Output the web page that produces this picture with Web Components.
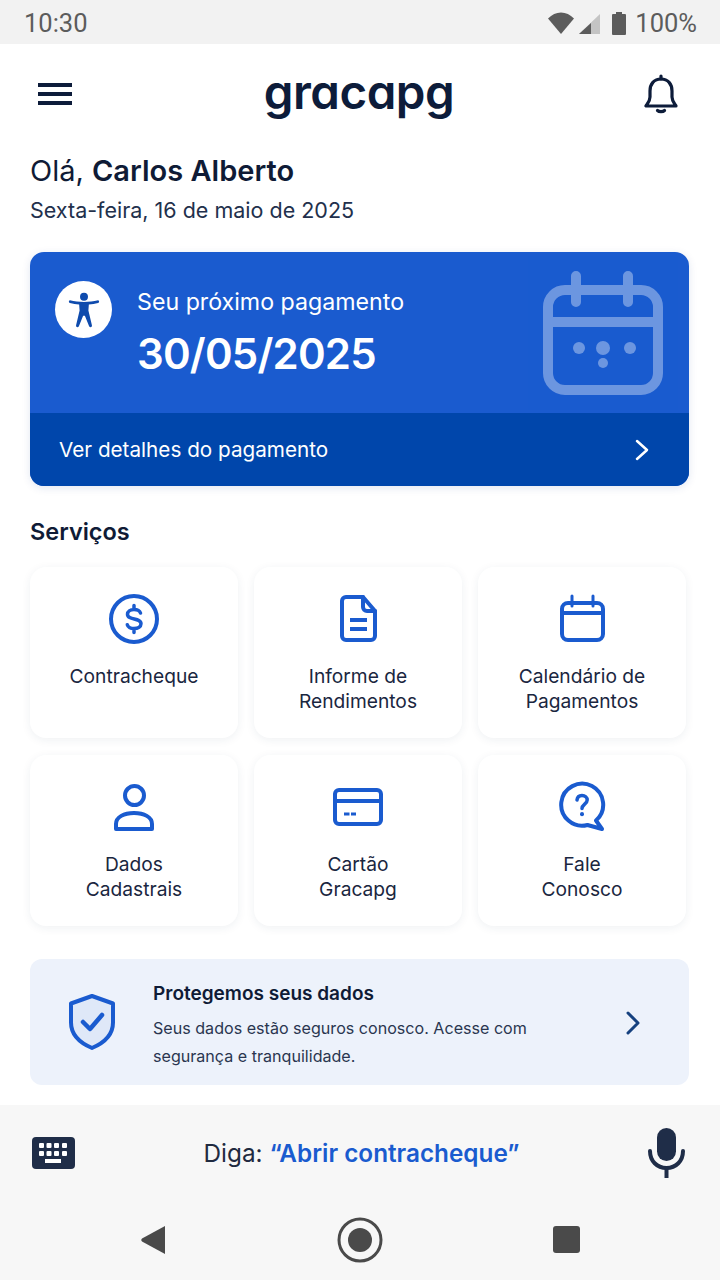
<!DOCTYPE html>
<html lang="pt-BR">
<head>
<meta charset="utf-8">
<title>Gracapg</title>
<style>
  html, body { margin: 0; padding: 0; background: #fff; }
  body { width: 720px; height: 1280px; overflow: hidden; font-family: Inter, "Liberation Sans", sans-serif; color: #0f1b36; display: flex; flex-direction: column; }
  main-content { flex: 1; }
</style>
</head>
<body>
<status-bar></status-bar>
<app-header></app-header>
<main-content>
  <greeting-block name="Carlos Alberto" date="Sexta-feira, 16 de maio de 2025"></greeting-block>
  <payment-card date="30/05/2025"></payment-card>
  <section-title>Serviços</section-title>
  <service-grid>
    <service-tile>
      <svg slot="icon" width="64" height="56" viewBox="0 0 64 56" fill="none" stroke="#1a5bcf" stroke-width="4" stroke-linecap="round" stroke-linejoin="round">
        <circle cx="32" cy="28" r="23"/>
        <path stroke-width="3.500" d="M38.500 22c-.8-2.300-3.200-3.500-6.500-3.500-3.800 0-6.500 1.900-6.500 4.700 0 6.600 13.500 3.100 13.500 9.600 0 2.900-2.900 4.700-7 4.700-3.400 0-5.900-1.300-6.700-3.800M32 14.500v4M32 37.500v4"/>
      </svg>
      Contracheque
    </service-tile>
    <service-tile>
      <svg slot="icon" width="64" height="56" viewBox="0 0 64 56" fill="none" stroke="#1a5bcf" stroke-width="4" stroke-linecap="round" stroke-linejoin="round">
        <path d="M16 10a4 4 0 0 1 4-4h17l12 14v25a4 4 0 0 1-4 4H20a4 4 0 0 1-4-4z"/>
        <path d="M37 6v10a4 4 0 0 0 4 4h8"/>
        <path stroke-linecap="butt" d="M24 29h17M24 38h17"/>
      </svg>
      Informe de<br>Rendimentos
    </service-tile>
    <service-tile>
      <svg slot="icon" width="64" height="56" viewBox="0 0 64 56" fill="none" stroke="#1a5bcf" stroke-width="4" stroke-linecap="round" stroke-linejoin="round">
        <rect x="12" y="12" width="41" height="37" rx="6"/>
        <path d="M12 22h41"/>
        <path stroke-width="3" d="M22 5v10M43 5v10"/>
      </svg>
      Calendário de<br>Pagamentos
    </service-tile>
    <service-tile>
      <svg slot="icon" width="64" height="56" viewBox="0 0 64 56" fill="none" stroke="#1a5bcf" stroke-width="4" stroke-linecap="round" stroke-linejoin="round">
        <circle cx="32.500" cy="16.500" r="9.500"/>
        <path d="M14 50v-5c0-7 8-11 18-11s18 4 18 11v5z"/>
      </svg>
      Dados<br>Cadastrais
    </service-tile>
    <service-tile>
      <svg slot="icon" width="64" height="56" viewBox="0 0 64 56" fill="none" stroke="#1a5bcf" stroke-width="4" stroke-linecap="round" stroke-linejoin="round">
        <rect x="9" y="11" width="46" height="34" rx="4"/>
        <path d="M9 22h46"/>
        <path stroke-width="3" stroke-linecap="butt" d="M18 35h5.500M25 35h5"/>
      </svg>
      Cartão<br>Gracapg
    </service-tile>
    <service-tile>
      <svg slot="icon" width="64" height="56" viewBox="0 0 64 56" fill="none" stroke="#1a5bcf" stroke-width="4" stroke-linecap="round" stroke-linejoin="round">
        <path d="M46 41.500A21 21 0 1 0 37.500 46L52 50z"/>
        <path stroke-width="3.500" d="M27 21c.3-2.800 2.400-4.500 5-4.500 3 0 5.200 1.900 5.200 4.500 0 4-5.200 4.200-5.200 8.500"/>
        <path d="M32 35v.2"/>
      </svg>
      Fale<br>Conosco
    </service-tile>
  </service-grid>
  <security-banner heading="Protegemos seus dados">Seus dados estão seguros conosco. Acesse com<br>segurança e tranquilidade.</security-banner>
</main-content>
<voice-bar></voice-bar>

<script>
class StatusBar extends HTMLElement {
  constructor() {
    super();
    this.attachShadow({ mode: 'open' }).innerHTML = `
    <style>
      :host { display: flex; align-items: center; justify-content: space-between; height: 44px; box-sizing: border-box; padding: 2px 23px 0 24px; background: #f2f2f2; color: #5c5c5c; font: 400 25.500px Roboto, "Liberation Sans", sans-serif; }
      .right { display: flex; align-items: center; gap: 8px; }
      svg { display: block; }
    </style>
    <span>10:30</span>
    <div class="right">
      <svg width="30" height="24" viewBox="0 0 30 24"><path d="M2 7.500C6 3.500 10 1.500 15 1.500s9 2 13 6L15 23z" fill="#5c5c5c"/></svg>
      <svg width="22" height="24" viewBox="0 0 22 24" style="margin-left:-6px"><path d="M22 3v20H1z" fill="#c4c4c4"/><path d="M13 12v11H1z" fill="#5c5c5c"/></svg>
      <svg width="14" height="24" viewBox="0 0 14 24" style="margin:0 1px 0 4px"><path d="M4 1h6v2h3a1 1 0 0 1 1 1v19a1 1 0 0 1-1 1H1a1 1 0 0 1-1-1V4a1 1 0 0 1 1-1h3z" fill="#5c5c5c"/></svg>
      <span>100%</span>
    </div>`;
  }
}

class AppHeader extends HTMLElement {
  constructor() {
    super();
    this.attachShadow({ mode: 'open' }).innerHTML = `
    <style>
      :host { display: flex; align-items: center; justify-content: space-between; height: 100px; padding: 0 42px 0 38px; color: #0d1c3a; }
      .logo { font: 600 47.500px/1 Inter, "Liberation Sans", sans-serif; font-feature-settings: "cv11"; letter-spacing: -0.5px; margin-top: -5px; position: relative; left: 1px; }
      svg { display: block; }
    </style>
    <svg width="34" height="24" viewBox="0 0 34 24" fill="none" stroke="#0d1c3a" stroke-width="4"><path d="M0 3h34M0 12h34M0 21h34"/></svg>
    <span class="logo">gracapg</span>
    <svg width="34" height="40" viewBox="0 0 34 40" fill="none" stroke="#0d1c3a" stroke-width="3.200" stroke-linecap="round" stroke-linejoin="round">
      <path d="M17 5c-7 0-11 5-11 12v6c0 4-2 6-4 9h30c-2-3-4-5-4-9v-6c0-7-4-12-11-12z"/>
      <path d="M17 2v3M13.500 36.500c1.500 1.500 5.500 1.500 7 0"/>
    </svg>`;
  }
}

class GreetingBlock extends HTMLElement {
  constructor() {
    super();
    this.attachShadow({ mode: 'open' }).innerHTML = `
    <style>
      :host { display: block; padding: 9px 30px 0; height: 108px; box-sizing: border-box; color: #0f1b36; }
      h1 { margin: 0; font-size: 29px; line-height: 36px; font-weight: 400; }
      b { font-weight: 600; }
      p { margin: 6px 0 0; font-size: 21.500px; line-height: 30px; color: #22304c; }
    </style>
    <h1>Olá, <b>${this.getAttribute('name')}</b></h1>
    <p>${this.getAttribute('date')}</p>`;
  }
}

class PaymentCard extends HTMLElement {
  constructor() {
    super();
    this.attachShadow({ mode: 'open' }).innerHTML = `
    <style>
      :host { display: block; margin: 0 31px 0 30px; border-radius: 14px; overflow: hidden; background: #1a5bcf; color: #fff; box-shadow: 0 2px 8px rgba(20,60,140,.12); }
      .top { display: flex; height: 161px; box-sizing: border-box; padding: 29px 26px 0 25px; }
      .badge { width: 57px; height: 57px; flex: none; border-radius: 50%; background: #fff; display: flex; align-items: center; justify-content: center; }
      .text { margin-left: 25px; flex: 1; }
      .label { font-size: 23.200px; line-height: 28px; margin-top: 7px; }
      .date { font-size: 42px; line-height: 52px; font-weight: 600; letter-spacing: -0.8px; margin-top: 12px; }
      .cal { margin-top: -10px; opacity: .36; }
      .bottom { display: flex; align-items: center; justify-content: space-between; height: 73px; padding: 0 40px 0 29px; background: #0046ab; font-size: 20.700px; }
      svg { display: block; }
    </style>
    <div class="top">
      <div class="badge">
        <svg width="32" height="37" viewBox="0 0 36 42" fill="#0f4bad"><circle cx="18" cy="6.500" r="4.500"/><path d="M2 13.500c-1.600-.3-1.600-2.700 0-3 5 1 10.500 2 16 2s11-1 16-2c1.600.3 1.600 2.700 0 3-3.500.8-7 1.400-10.500 1.800l-.5 6.700 4 17c.4 2.300-2.300 3-3.200 1L19 28h-2l-4.800 12c-.9 2-3.600 1.300-3.200-1l4-17-.5-6.700C9 14.900 5.500 14.300 2 13.500z"/></svg>
      </div>
      <div class="text">
        <div class="label">Seu próximo pagamento</div>
        <div class="date">${this.getAttribute('date')}</div>
      </div>
      <svg class="cal" width="120" height="124" viewBox="0 0 120 124" fill="none" stroke="#fff" stroke-width="10" stroke-linecap="round">
        <path d="M22 19h76a17 17 0 0 1 17 17v66a17 17 0 0 1-17 17H22a17 17 0 0 1-17-17V36a17 17 0 0 1 17-17zM5 51h110M33 5v26M85 5v26"/>
        <g stroke="none" fill="#fff"><circle cx="36" cy="77" r="6"/><circle cx="60" cy="77" r="7"/><circle cx="87" cy="77" r="6"/><circle cx="60" cy="92" r="5"/></g>
      </svg>
    </div>
    <div class="bottom">
      <span>Ver detalhes do pagamento</span>
      <svg width="14" height="22" viewBox="0 0 14 22" fill="none" stroke="#fff" stroke-width="2.500" stroke-linecap="round" stroke-linejoin="round"><path d="M2 2l10 9-10 9"/></svg>
    </div>`;
  }
}

class SectionTitle extends HTMLElement {
  constructor() {
    super();
    this.attachShadow({ mode: 'open' }).innerHTML = `
    <style>
      :host { display: block; padding: 31px 30px 0; height: 81px; box-sizing: border-box; font-size: 23.500px; line-height: 30px; font-weight: 600; color: #0f1b36; }
    </style>
    <slot></slot>`;
  }
}

class ServiceGrid extends HTMLElement {
  constructor() {
    super();
    this.attachShadow({ mode: 'open' }).innerHTML = `
    <style>
      :host { display: grid; grid-template-columns: repeat(3, 208px); grid-auto-rows: 171px; gap: 17px 16px; padding: 0 30px; }
    </style>
    <slot></slot>`;
  }
}

class ServiceTile extends HTMLElement {
  constructor() {
    super();
    this.attachShadow({ mode: 'open' }).innerHTML = `
    <style>
      :host { display: flex; flex-direction: column; align-items: center; box-sizing: border-box; padding-top: 24px; background: #fff; border-radius: 16px; box-shadow: 0 2px 10px rgba(30,50,90,.07); }
      .icon { height: 56px; margin-bottom: 17px; }
      .label { font-size: 19.200px; line-height: 25px; text-align: center; color: #1a2640; }
    </style>
    <div class="icon"><slot name="icon"></slot></div>
    <div class="label"><slot></slot></div>`;
  }
}

class SecurityBanner extends HTMLElement {
  constructor() {
    super();
    this.attachShadow({ mode: 'open' }).innerHTML = `
    <style>
      :host { display: flex; align-items: center; margin: 33px 31px 0 30px; height: 126px; box-sizing: border-box; padding: 0 49px 0 38px; background: #edf2fb; border-radius: 12px; }
      .text { flex: 1; margin-left: 37px; padding-top: 8px; }
      .title { font-size: 19px; line-height: 24px; font-weight: 600; color: #0f1b36; }
      .body { font-size: 16.100px; line-height: 28px; color: #2a3650; margin-top: 8px; }
      svg { display: block; }
    </style>
    <svg width="48" height="56" viewBox="0 0 48 56" stroke-linecap="round" stroke-linejoin="round">
      <path d="M24 2l21 7.500v19c0 12-8 20-21 25.500C11 48.500 3 40.500 3 28.500v-19z" fill="#dfe8f8" stroke="#1a5bcf" stroke-width="4"/>
      <path d="M15 28l7 7L34 21" fill="none" stroke="#1a5bcf" stroke-width="4.500"/>
    </svg>
    <div class="text">
      <div class="title">${this.getAttribute('heading')}</div>
      <div class="body"><slot></slot></div>
    </div>
    <svg width="14" height="24" viewBox="0 0 14 24" fill="none" stroke="#16417f" stroke-width="3" stroke-linecap="round" stroke-linejoin="round" style="margin-top:1px"><path d="M2 2l10 10-10 10"/></svg>`;
  }
}

class VoiceBar extends HTMLElement {
  constructor() {
    super();
    this.attachShadow({ mode: 'open' }).innerHTML = `
    <style>
      :host { display: block; height: 175px; background: #f7f7f7; }
      .say { display: flex; align-items: center; justify-content: space-between; height: 96px; padding: 0 35px 0 32px; font-size: 24.300px; color: #1f2a40; }
      .say b { font-weight: 600; color: #1a5bcf; }
      .nav { display: flex; align-items: center; justify-content: space-between; height: 79px; padding: 0 140px; margin-top: -1px; }
      svg { display: block; }
    </style>
    <div class="say">
      <svg width="43" height="32" viewBox="0 0 43 32"><rect width="43" height="32" rx="4" fill="#1f2d48"/><g fill="#fff"><rect x="7" y="6" width="5" height="5" rx="1"/><rect x="14.500" y="6" width="5" height="5" rx="1"/><rect x="22" y="6" width="5" height="5" rx="1"/><rect x="30" y="6" width="5" height="5" rx="1"/><rect x="7" y="14" width="5" height="5" rx="1"/><rect x="14.500" y="14" width="5" height="5" rx="1"/><rect x="22" y="14" width="5" height="5" rx="1"/><rect x="30" y="14" width="5" height="5" rx="1"/><rect x="13" y="22" width="16" height="4"/></g></svg>
      <span>Diga: <b>“Abrir contracheque”</b></span>
      <svg width="37" height="50" viewBox="0 0 37 50" fill="none"><rect x="9" y="0" width="19" height="33" rx="9.500" fill="#1f2d48"/><path d="M2 23c0 10 7 17 16.500 17S35 33 35 23" stroke="#1f2d48" stroke-width="4" stroke-linecap="round"/><path d="M18.500 40v10" stroke="#1f2d48" stroke-width="4"/></svg>
    </div>
    <div class="nav">
      <svg width="26" height="30" viewBox="0 0 26 30"><path d="M25 1v28L2 16.500a2 2 0 0 1 0-3z" fill="#4a4a4a"/></svg>
      <svg width="46" height="46" viewBox="0 0 46 46"><circle cx="23" cy="23" r="21" fill="none" stroke="#4a4a4a" stroke-width="3"/><circle cx="23" cy="23" r="12" fill="#4a4a4a"/></svg>
      <svg width="27" height="27" viewBox="0 0 27 27"><rect width="27" height="27" rx="3" fill="#4a4a4a"/></svg>
    </div>`;
  }
}

class MainContent extends HTMLElement {
  constructor() {
    super();
    this.attachShadow({ mode: 'open' }).innerHTML = `
    <style>:host { display: block; }</style>
    <slot></slot>`;
  }
}

customElements.define('status-bar', StatusBar);
customElements.define('app-header', AppHeader);
customElements.define('greeting-block', GreetingBlock);
customElements.define('payment-card', PaymentCard);
customElements.define('section-title', SectionTitle);
customElements.define('service-grid', ServiceGrid);
customElements.define('service-tile', ServiceTile);
customElements.define('security-banner', SecurityBanner);
customElements.define('voice-bar', VoiceBar);
customElements.define('main-content', MainContent);
</script>
</body>
</html>
